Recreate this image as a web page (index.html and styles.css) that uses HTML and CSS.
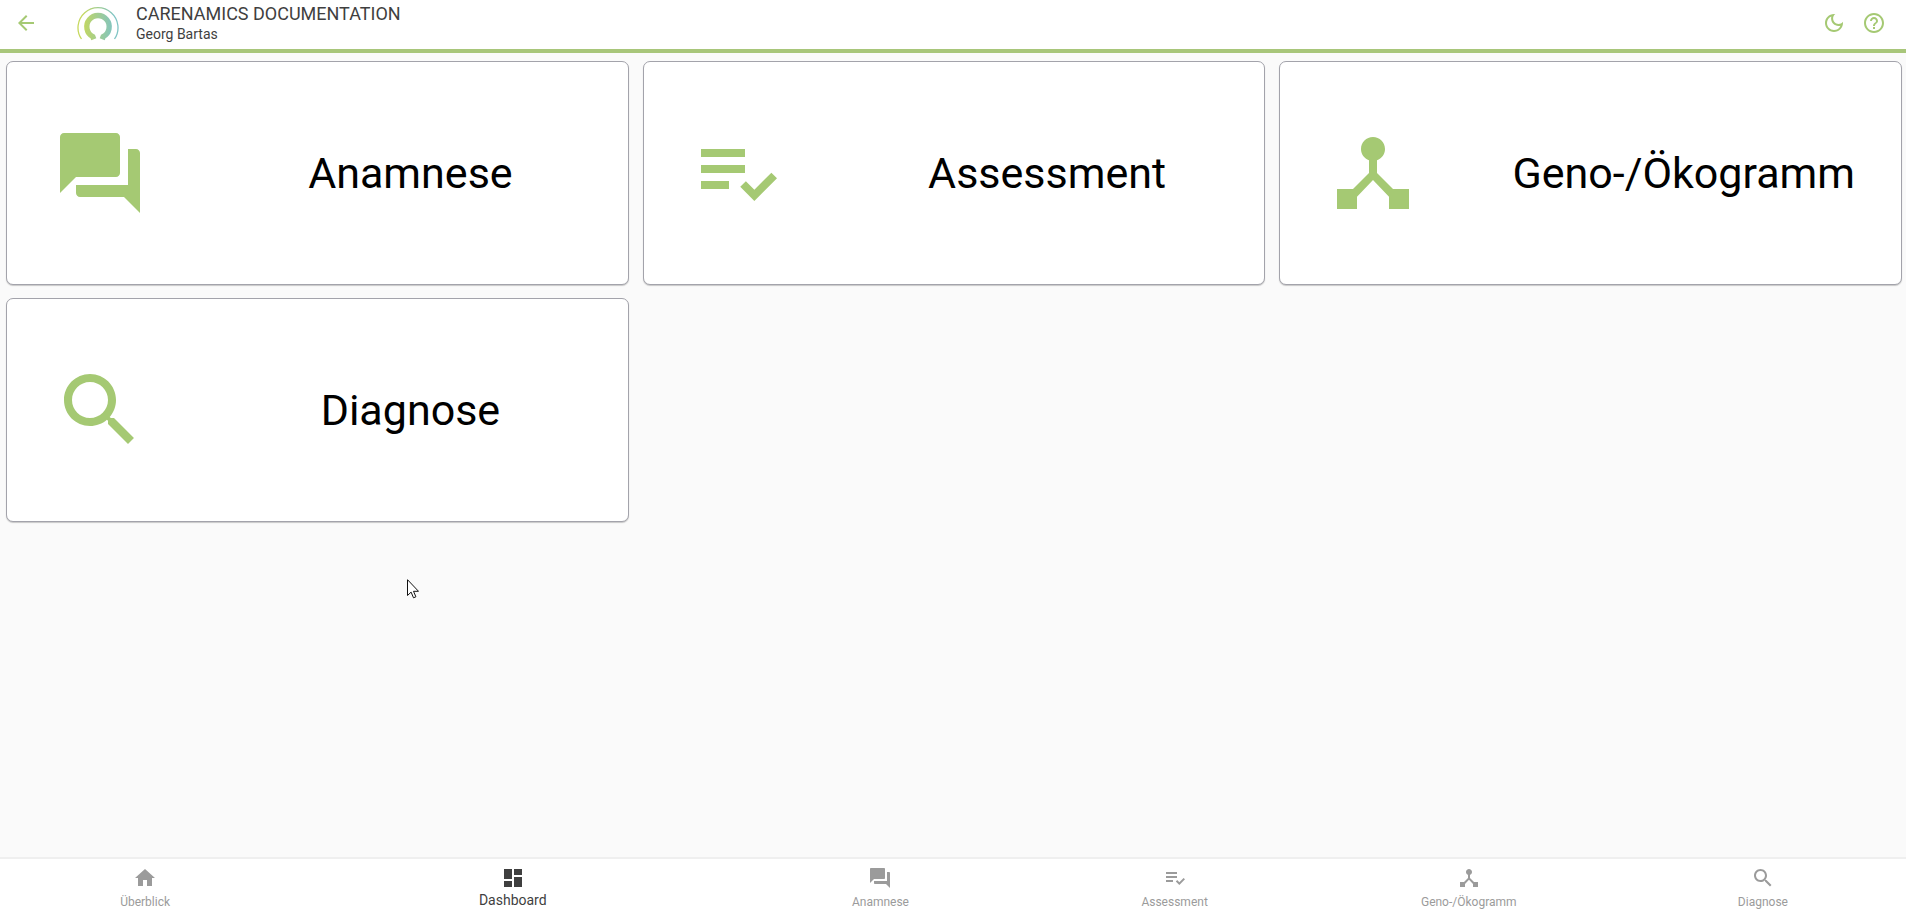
FILE: index.html
```html
<!DOCTYPE html>
<html lang="de">
<head>
<meta charset="utf-8">
<meta name="viewport" content="width=device-width, initial-scale=1">
<title>Carenamics Documentation</title>
<link rel="stylesheet" href="styles.css">
</head>
<body>
<svg class="sprite" aria-hidden="true">
  <symbol id="forum" viewBox="0 0 24 24"><path d="M21 6h-2v9H6v2c0 .55.45 1 1 1h11l4 4V7c0-.55-.45-1-1-1zm-4 6V3c0-.55-.45-1-1-1H3c-.55 0-1 .45-1 1v14l4-4h10c.55 0 1-.45 1-1z"/></symbol>
  <symbol id="check-list" viewBox="0 0 24 24"><path d="M3 10h11v2H3zm0-4h11v2H3zm0 8h7v2H3zm17.590-2.070-4.250 4.240-2.120-2.120-1.410 1.410L16.340 19 22 13.340z"/></symbol>
  <symbol id="hub" viewBox="0 0 24 24"><path d="M17 16l-4-4V8.820C14.160 8.400 15 7.300 15 6c0-1.660-1.340-3-3-3S9 4.340 9 6c0 1.300.84 2.400 2 2.820V12l-4 4H3v5h5v-3.050l4-4.200 4 4.200V21h5v-5h-4z"/></symbol>
  <symbol id="search" viewBox="0 0 24 24"><path d="M15.500 14h-.79l-.28-.27C15.410 12.590 16 11.110 16 9.500 16 5.910 13.090 3 9.500 3S3 5.910 3 9.500 5.910 16 9.500 16c1.610 0 3.090-.59 4.230-1.570l.27.28v.79l5 4.990L20.490 19l-4.990-5zm-6 0C7.010 14 5 11.990 5 9.500S7.010 5 9.500 5 14 7.010 14 9.500 11.990 14 9.500 14z"/></symbol>
</svg>

<header class="topbar">
  <button class="icon-button" type="button" aria-label="Zurück">
    <svg class="icon" viewBox="0 0 24 24"><path d="M20 11H7.830l5.590-5.590L12 4l-8 8 8 8 1.410-1.410L7.830 13H20v-2z"/></svg>
  </button>
  <svg class="logo" viewBox="0 0 42 36" role="img" aria-label="Carenamics">
    <defs>
      <linearGradient id="ring" gradientUnits="userSpaceOnUse" x1="5" y1="0" x2="37" y2="0">
        <stop offset="0" stop-color="#c6d85c"/>
        <stop offset=".45" stop-color="#a5ce8c"/>
        <stop offset="1" stop-color="#7fc4c4"/>
      </linearGradient>
    </defs>
    <path d="M4.500 34A20 20 0 1 1 37.500 34" fill="none" stroke="url(#ring)" stroke-width="1.300"/>
    <path d="M16.800 34.200L15.800 31.600A11.200 11.200 0 1 1 26.200 31.600L25.200 34.200" fill="none" stroke="url(#ring)" stroke-width="5.400"/>
  </svg>
  <div class="heading">
    <h1 class="app-name">CARENAMICS DOCUMENTATION</h1>
    <p class="patient">Georg Bartas</p>
  </div>
  <button class="icon-button" type="button" aria-label="Dunkler Modus">
    <svg class="icon" viewBox="0 0 24 24"><path d="M9.370 5.510C9.190 6.150 9.100 6.820 9.100 7.500c0 4.080 3.320 7.400 7.400 7.400.68 0 1.350-.09 1.990-.27C17.450 17.190 14.930 19 12 19c-3.860 0-7-3.140-7-7 0-2.930 1.810-5.450 4.370-6.490zM12 3c-4.970 0-9 4.030-9 9s4.030 9 9 9 9-4.030 9-9c0-.46-.04-.92-.1-1.360-.98 1.370-2.580 2.260-4.400 2.260-2.980 0-5.400-2.420-5.400-5.400 0-1.810.89-3.420 2.260-4.400-.44-.06-.9-.1-1.360-.1z"/></svg>
  </button>
  <button class="icon-button" type="button" aria-label="Hilfe">
    <svg class="icon" viewBox="0 0 24 24"><path d="M11 18h2v-2h-2v2zm1-16C6.480 2 2 6.480 2 12s4.480 10 10 10 10-4.480 10-10S17.520 2 12 2zm0 18c-4.410 0-8-3.590-8-8s3.590-8 8-8 8 3.590 8 8-3.590 8-8 8zm0-14c-2.210 0-4 1.790-4 4h2c0-1.100.9-2 2-2s2 .9 2 2c0 2-3 1.750-3 5h2c0-2.250 3-2.500 3-5 0-2.210-1.790-4-4-4z"/></svg>
  </button>
</header>

<main class="cards">
  <a class="card" href="#anamnese"><svg class="card-icon"><use href="#forum"/></svg><span class="card-title">Anamnese</span></a>
  <a class="card" href="#assessment"><svg class="card-icon"><use href="#check-list"/></svg><span class="card-title">Assessment</span></a>
  <a class="card" href="#oekogramm"><svg class="card-icon"><use href="#hub"/></svg><span class="card-title">Geno-/Ökogramm</span></a>
  <a class="card" href="#diagnose"><svg class="card-icon"><use href="#search"/></svg><span class="card-title">Diagnose</span></a>
</main>

<nav class="bottom-nav">
  <a class="nav-item" href="#home"><svg class="icon" viewBox="0 0 24 24"><path d="M10 20v-6h4v6h5v-8h3L12 3 2 12h3v8z"/></svg><span>Überblick</span></a>
  <span class="nav-gap"></span>
  <a class="nav-item nav-item-active" href="#dashboard" aria-current="page"><svg class="icon" viewBox="0 0 24 24"><path d="M3 13h8V3H3v10zm0 8h8v-6H3v6zm10 0h8V11h-8v10zm0-18v6h8V3h-8z"/></svg><span>Dashboard</span></a>
  <span class="nav-gap"></span>
  <a class="nav-item" href="#anamnese"><svg class="icon"><use href="#forum"/></svg><span>Anamnese</span></a>
  <a class="nav-item" href="#assessment"><svg class="icon"><use href="#check-list"/></svg><span>Assessment</span></a>
  <a class="nav-item" href="#oekogramm"><svg class="icon"><use href="#hub"/></svg><span>Geno-/Ökogramm</span></a>
  <a class="nav-item" href="#diagnose"><svg class="icon"><use href="#search"/></svg><span>Diagnose</span></a>
</nav>

<svg class="pointer" viewBox="0 0 12 20" aria-hidden="true"><path d="M.5.7v15.800l3.600-3.400 2.400 5.700 2.400-1-2.400-5.500h5z" fill="#fff" stroke="#111"/></svg>
</body>
</html>
```

FILE: styles.css
```css
* {
  box-sizing: border-box;
}

body {
  display: flex;
  flex-direction: column;
  min-height: 100vh;
  margin: 0;
  overflow-x: hidden;
  background: #fafafa;
  color: #3f3f3f;
  font-family: Roboto, "Liberation Sans", sans-serif;
}

a {
  color: inherit;
  text-decoration: none;
}

.sprite {
  position: absolute;
  width: 0;
  height: 0;
}

.icon {
  display: block;
  width: 24px;
  height: 24px;
  fill: currentColor;
}

.topbar {
  display: flex;
  align-items: flex-start;
  padding: 3px 12px 0 6px;
  background: #fff;
  border-bottom: 4px solid #a8c67a;
}

.icon-button {
  padding: 8px;
  border: 0;
  background: none;
  color: #a5c973;
  cursor: pointer;
}

.logo {
  width: 42px;
  height: 36px;
  margin: 2px 17px 0 31px;
}

.heading {
  flex: 1;
  height: 46px;
}

.app-name {
  margin: 0;
  font-size: 18px;
  font-weight: 400;
  line-height: 22px;
}

.patient {
  margin: 0;
  font-size: 14px;
  line-height: 18px;
}

.cards {
  display: grid;
  flex: 1;
  grid-template-columns: repeat(3, 1fr);
  align-content: start;
  gap: 13px 14px;
  padding: 8px 4px 8px 6px;
}

.card {
  display: grid;
  grid-template-columns: 3fr 7fr;
  align-items: center;
  justify-items: center;
  padding: 63px 0;
  border: 1px solid #a3a3ab;
  border-radius: 7px;
  background: #fff;
  box-shadow: 0 1px 1px #c8c8c8;
  color: #000;
}

.card-icon {
  width: 96px;
  height: 96px;
  fill: #a5c973;
}

.card-title {
  font-size: 43px;
  line-height: 48px;
  white-space: nowrap;
}

.bottom-nav {
  display: grid;
  grid-template-columns: 4fr 1fr 4fr 1fr repeat(4, 4fr);
  margin: 0 -4px 0 -2px;
  border-top: 2px solid #efefef;
  background: #fff;
}

.nav-item {
  display: flex;
  flex-direction: column;
  align-items: center;
  padding: 7px 12px 1px;
  color: #9b9b9b;
  font-size: 12px;
  line-height: 24px;
}

.nav-item-active {
  color: #3f3f3f;
  font-size: 14px;
  line-height: 21px;
}

.pointer {
  position: absolute;
  top: 579px;
  left: 407px;
  width: 12px;
  height: 20px;
}
```
